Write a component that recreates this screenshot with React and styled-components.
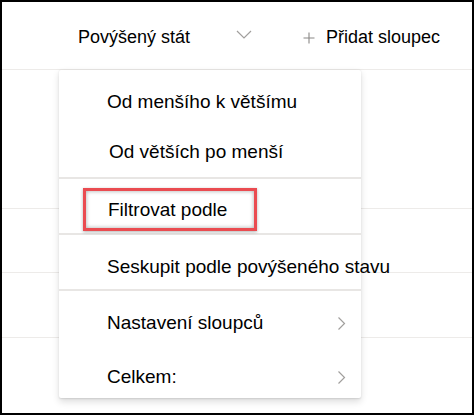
import React from "react";
import styled, { createGlobalStyle } from "styled-components";

const Global = createGlobalStyle`
  html, body { margin: 0; padding: 0; background: #fff; }
  body { font-family: "Liberation Sans", Arial, sans-serif; color: #000; }
`;

const Frame = styled.div`
  position: relative;
  width: 474px;
  height: 415px;
  box-sizing: border-box;
  border: 2px solid #000;
  background: #fff;
  overflow: hidden;
`;

const Header = styled.div`
  height: 68px;
  box-sizing: border-box;
  border-bottom: 1px solid #edebe9;
  display: flex;
  align-items: center;
  padding: 4px 0 0 76px;
  font-size: 18px;
  white-space: nowrap;
`;

const ColumnTitle = styled.span`
  width: 158px;
  flex: none;
`;

const HeaderChevron = styled.svg`
  margin-top: -6px;
  flex: none;
`;

const AddColumn = styled.span`
  display: flex;
  align-items: center;
  gap: 11px;
  margin-left: 51px;
  flex: none;
`;

const Row = styled.div`
  height: ${(p) => p.$h}px;
  box-sizing: border-box;
  border-bottom: 1px solid #edebe9;
`;

const Menu = styled.div`
  position: absolute;
  left: 57px;
  top: 68px;
  width: 302px;
  height: 328px;
  background: #fff;
  border-radius: 2px;
  box-shadow: 0 3.2px 7.2px rgba(0, 0, 0, 0.13), 0 0.6px 1.8px rgba(0, 0, 0, 0.11);
  display: flex;
  flex-direction: column;
  font-size: 19px;
`;

const Group = styled.div`
  height: ${(p) => p.$h}px;
  flex: none;
  box-sizing: border-box;
  padding-top: ${(p) => p.$pt}px;
  border-bottom: ${(p) => (p.$last ? "none" : "2px solid #e8e6e4")};
  display: flex;
  flex-direction: column;
`;

const Item = styled.div`
  height: ${(p) => p.$h}px;
  flex: none;
  display: flex;
  align-items: center;
  justify-content: space-between;
  padding: 0 15px 0 ${(p) => p.$pl || 48}px;
  white-space: nowrap;
`;

const Highlight = styled.div`
  margin: 9px 0 0 24px;
  width: 174px;
  height: 43px;
  box-sizing: border-box;
  border: 3px solid #ea4b50;
  box-shadow: inset 0 0 4px rgba(0, 0, 0, 0.35), 0 1px 3px rgba(0, 0, 0, 0.3);
  display: flex;
  align-items: center;
  padding-left: 22px;
  white-space: nowrap;
`;

const Chevron = () => (
  <svg width="9" height="15" viewBox="0 0 9 15">
    <path d="M1.5 1.5 L7.5 7.5 L1.5 13.5" fill="none" stroke="#a19f9d" strokeWidth="1.2" />
  </svg>
);

export default function App() {
  return (
    <Frame>
      <Global />
      <Header>
        <ColumnTitle>Povýšený stát</ColumnTitle>
        <HeaderChevron width="16" height="9" viewBox="0 0 16 9">
          <path d="M1 1 L8 8 L15 1" fill="none" stroke="#a19f9d" strokeWidth="1.2" />
        </HeaderChevron>
        <AddColumn>
          <svg width="12" height="12" viewBox="0 0 12 12">
            <path d="M6 0.5 V11.5 M0.5 6 H11.5" stroke="#8a8886" strokeWidth="1.1" />
          </svg>
          Přidat sloupec
        </AddColumn>
      </Header>
      <Row $h={139} />
      <Row $h={64} />
      <Row $h={65} />
      <Menu>
        <Group $h={109} $pt={7}>
          <Item $h={50}>Od menšího k většímu</Item>
          <Item $h={50} $pl={50}>Od větších po menší</Item>
        </Group>
        <Group $h={56} $pt={0}>
          <Highlight>Filtrovat podle</Highlight>
        </Group>
        <Group $h={56} $pt={9}>
          <Item $h={46}>Seskupit podle povýšeného stavu</Item>
        </Group>
        <Group $h={107} $pt={6} $last>
          <Item $h={52}>
            Nastavení sloupců
            <Chevron />
          </Item>
          <Item $h={56}>
            Celkem:
            <Chevron />
          </Item>
        </Group>
      </Menu>
    </Frame>
  );
}
